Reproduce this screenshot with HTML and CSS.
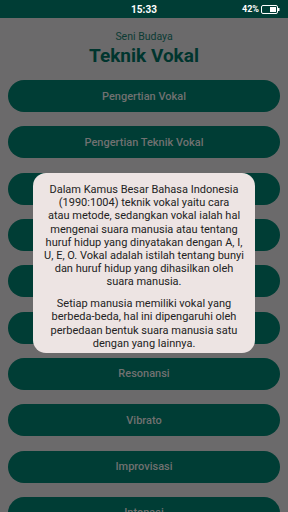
FILE: index.html
```html
<!DOCTYPE html>
<html lang="id">
<head>
    <meta charset="UTF-8">
    <meta name="viewport" content="width=device-width, initial-scale=1.0">
    <title>Teknik Vokal</title>
    <link rel="stylesheet" href="styles.css">
</head>
<body>
    <div class="status-bar">
        <span class="time">15:33</span>
        <div class="battery">
            <span>42%</span>
            <svg width="19" height="9" viewBox="0 0 19 9">
                <rect x="0.5" y="0.5" width="16" height="8" rx="1.5" fill="none" stroke="#fff" stroke-width="1"/>
                <rect x="9" y="2" width="6" height="5" fill="#fff"/>
                <rect x="17" y="3" width="1.5" height="3" fill="#fff"/>
            </svg>
        </div>
    </div>

    <main class="screen">
        <header class="header">
            <p class="subtitle">Seni Budaya</p>
            <h1 class="title">Teknik Vokal</h1>
        </header>

        <!-- Menu materi -->
        <nav class="menu">
            <a class="menu-btn">Pengertian Vokal</a>
            <a class="menu-btn">Pengertian Teknik Vokal</a>
            <a class="menu-btn">Pernapasan</a>
            <a class="menu-btn">Artikulasi</a>
            <a class="menu-btn">Phrasering</a>
            <a class="menu-btn">Intonasi</a>
            <a class="menu-btn">Resonansi</a>
            <a class="menu-btn">Vibrato</a>
            <a class="menu-btn">Improvisasi</a>
            <a class="menu-btn">Intonasi</a>
        </nav>
    </main>

    <!-- Dialog keterangan -->
    <div class="dialog">
        <p>Dalam Kamus Besar Bahasa Indonesia<br>(1990:1004) teknik vokal yaitu cara<br>atau metode, sedangkan vokal ialah hal<br>mengenai suara manusia atau tentang<br>huruf hidup yang dinyatakan dengan A, I,<br>U, E, O. Vokal adalah istilah tentang bunyi<br>dan huruf hidup yang dihasilkan oleh<br>suara manusia.</p>
        <p>Setiap manusia memiliki vokal yang<br>berbeda-beda, hal ini dipengaruhi oleh<br>perbedaan bentuk suara manusia satu<br>dengan yang lainnya.</p>
    </div>
</body>
</html>
```

FILE: styles.css
```css
/* Basic page styling */
body {
    margin: 0;
    width: 288px;
    height: 512px;
    overflow: hidden;
    position: relative;
    background-color: #6b6a6b;
    font-family: Roboto, "Noto Sans", sans-serif;
}

/* Status bar */
.status-bar {
    height: 18px;
    background-color: #003d35;
    color: #fff;
    display: flex;
    align-items: center;
    justify-content: center;
    position: relative;
}

.time {
    font-size: 10px;
    font-weight: 700;
}

.battery {
    position: absolute;
    right: 8px;
    top: 0;
    height: 18px;
    display: flex;
    align-items: center;
    gap: 2px;
    font-size: 9px;
    font-weight: 700;
}

/* Header */
.header {
    height: 62px;
    display: flex;
    flex-direction: column;
    align-items: center;
    padding-top: 13px;
    box-sizing: border-box;
}

.subtitle {
    margin: 0;
    font-size: 10.5px;
    line-height: 12px;
    color: #0c3b34;
}

.title {
    margin: 2px 0 0;
    font-size: 19px;
    line-height: 22px;
    font-weight: 700;
    color: #00352e;
}

/* Menu buttons */
.menu {
    display: flex;
    flex-direction: column;
    gap: 14.33px;
    padding: 0 8px;
}

.menu-btn {
    height: 32px;
    border-radius: 16px;
    background-color: #003d35;
    color: #717171;
    font-size: 11px;
    font-weight: 500;
    display: flex;
    align-items: center;
    justify-content: center;
    flex-shrink: 0;
}

/* Dialog */
.dialog {
    position: absolute;
    left: 33px;
    top: 173px;
    width: 222px;
    height: 180px;
    box-sizing: border-box;
    padding: 10px 4px 0;
    background-color: #ede4e3;
    border-radius: 13px;
    text-align: center;
    color: #222;
    font-size: 11px;
    line-height: 13.2px;
}

.dialog p {
    margin: 0 0 8.5px;
    white-space: nowrap;
}
```
